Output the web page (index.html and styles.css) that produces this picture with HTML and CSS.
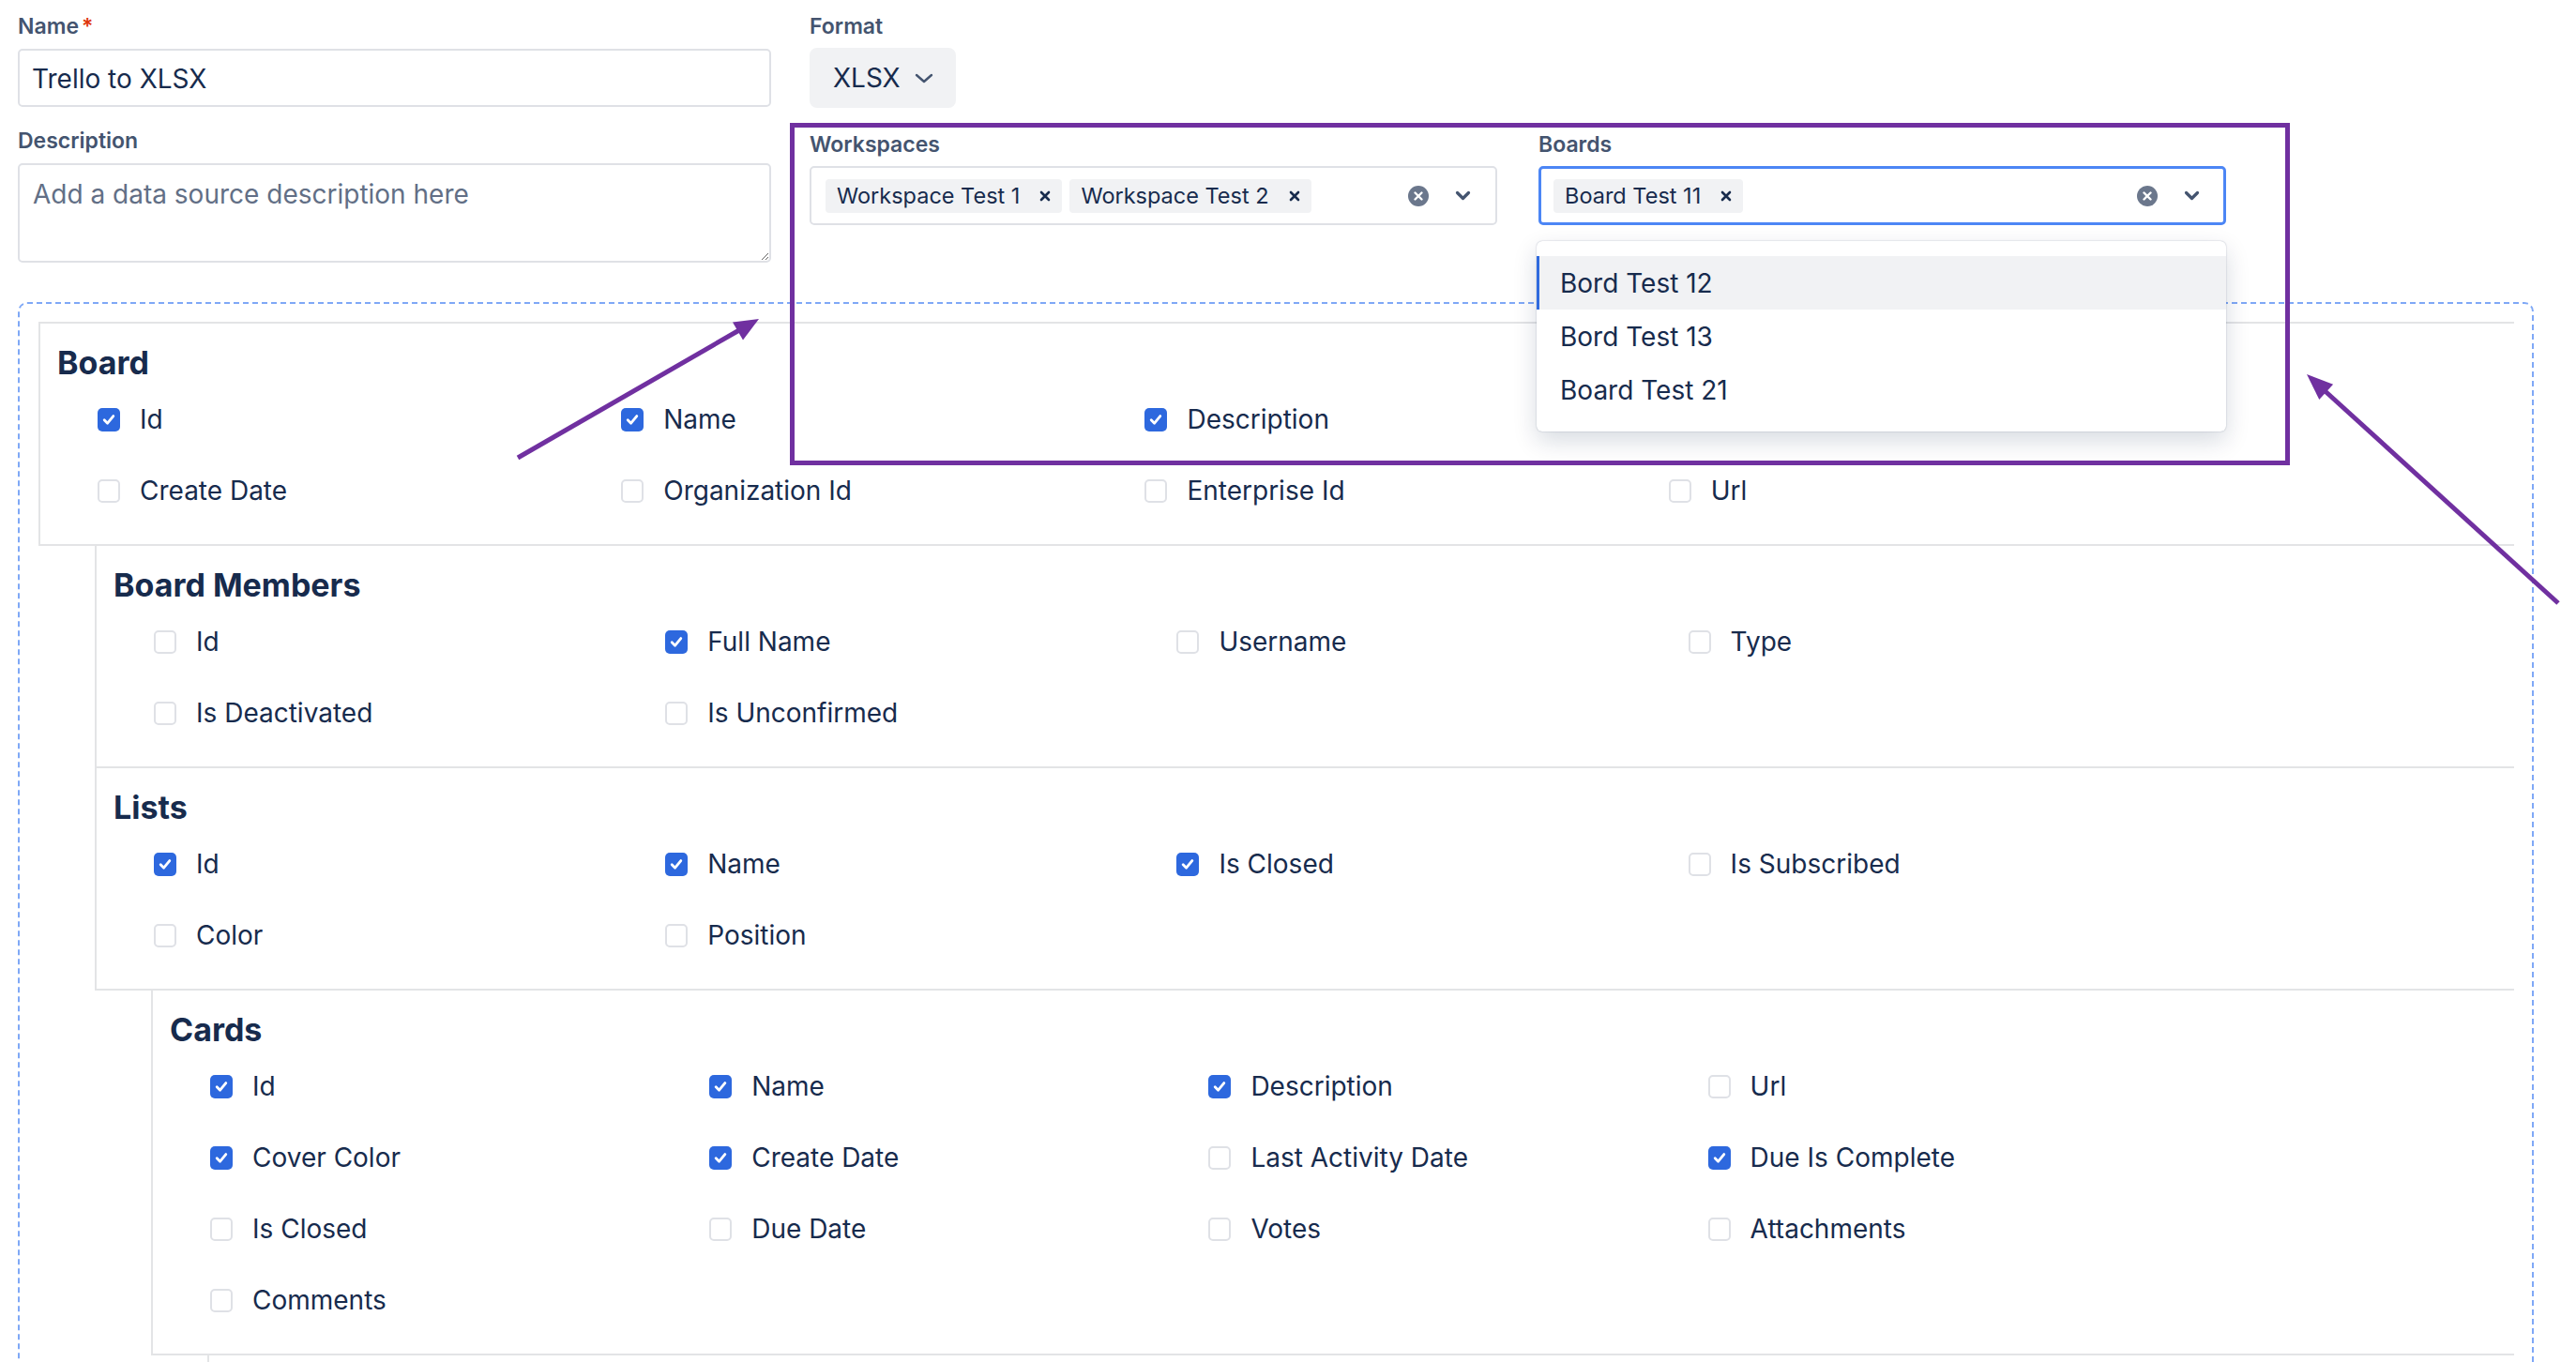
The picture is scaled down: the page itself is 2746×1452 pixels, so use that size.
FILE: index.html
```html
<!DOCTYPE html>
<html lang="en">
<head>
<meta charset="utf-8">
<title>Trello to XLSX</title>
<link rel="stylesheet" href="styles.css">
</head>
<body>
<div class="page">
  <div class="top">
    <div class="col-left">
      <div class="field">
        <label class="lbl">Name<span class="req">*</span></label>
        <input class="input" type="text" value="Trello to XLSX">
      </div>
      <div class="field field-desc">
        <label class="lbl">Description</label>
        <textarea class="textarea" placeholder="Add a data source description here"></textarea>
      </div>
    </div>
    <div class="col-right">
      <div class="field">
        <label class="lbl">Format</label>
        <button class="format-btn"><span>XLSX</span><svg class="fmt-chev" width="20" height="11" viewBox="0 0 20 11"><path d="M2 2 L10 9 L18 2" fill="none" stroke="#44546f" stroke-width="2.4" stroke-linecap="round" stroke-linejoin="round"/></svg></button>
      </div>
      <div class="selects">
        <div class="field sel-field">
          <label class="lbl">Workspaces</label>
          <div class="select">
            <span class="tag">Workspace Test 1<svg class="tag-x" width="12" height="12" viewBox="0 0 12 12"><path d="M2 2 L10 10 M10 2 L2 10" stroke="#172b4d" stroke-width="2.6" stroke-linecap="round"/></svg></span>
            <span class="tag">Workspace Test 2<svg class="tag-x" width="12" height="12" viewBox="0 0 12 12"><path d="M2 2 L10 10 M10 2 L2 10" stroke="#172b4d" stroke-width="2.6" stroke-linecap="round"/></svg></span>
            <div class="indicators">
              <svg class="clear" width="22" height="22" viewBox="0 0 22 22"><circle cx="11" cy="11" r="11" fill="#6b778c"/><path d="M7.5 7.5 L14.5 14.5 M14.5 7.5 L7.5 14.5" stroke="#fff" stroke-width="2.4" stroke-linecap="round"/></svg>
              <svg class="chev" width="17" height="11" viewBox="0 0 17 11"><path d="M2.5 2.5 L8.5 8.5 L14.5 2.5" fill="none" stroke="#44546f" stroke-width="3.2" stroke-linecap="round" stroke-linejoin="round"/></svg>
            </div>
          </div>
        </div>
        <div class="field sel-field">
          <label class="lbl">Boards</label>
          <div class="select focused">
            <span class="tag">Board Test 11<svg class="tag-x" width="12" height="12" viewBox="0 0 12 12"><path d="M2 2 L10 10 M10 2 L2 10" stroke="#172b4d" stroke-width="2.6" stroke-linecap="round"/></svg></span>
            <div class="indicators">
              <svg class="clear" width="22" height="22" viewBox="0 0 22 22"><circle cx="11" cy="11" r="11" fill="#6b778c"/><path d="M7.5 7.5 L14.5 14.5 M14.5 7.5 L7.5 14.5" stroke="#fff" stroke-width="2.4" stroke-linecap="round"/></svg>
              <svg class="chev" width="17" height="11" viewBox="0 0 17 11"><path d="M2.5 2.5 L8.5 8.5 L14.5 2.5" fill="none" stroke="#44546f" stroke-width="3.2" stroke-linecap="round" stroke-linejoin="round"/></svg>
            </div>
            <div class="menu">
              <div class="option active">Bord Test 12</div>
              <div class="option">Bord Test 13</div>
              <div class="option">Board Test 21</div>
            </div>
          </div>
        </div>
      </div>
    </div>
  </div>

  <div class="mapping">
    <div class="node root">
      <section class="box">
        <h3 class="title">Board</h3>
        <div class="fields">
          <label class="fld"><span class="cb on"></span>Id</label>
          <label class="fld"><span class="cb on"></span>Name</label>
          <label class="fld"><span class="cb on"></span>Description</label>
          <label class="fld"><span class="cb"></span>Closed</label>
          <label class="fld"><span class="cb"></span>Create Date</label>
          <label class="fld"><span class="cb"></span>Organization Id</label>
          <label class="fld"><span class="cb"></span>Enterprise Id</label>
          <label class="fld"><span class="cb"></span>Url</label>
        </div>
      </section>
      <div class="kids">
        <div class="node">
          <section class="box">
            <h3 class="title">Board Members</h3>
            <div class="fields">
              <label class="fld"><span class="cb"></span>Id</label>
              <label class="fld"><span class="cb on"></span>Full Name</label>
              <label class="fld"><span class="cb"></span>Username</label>
              <label class="fld"><span class="cb"></span>Type</label>
              <label class="fld"><span class="cb"></span>Is Deactivated</label>
              <label class="fld"><span class="cb"></span>Is Unconfirmed</label>
            </div>
          </section>
        </div>
        <div class="node">
          <section class="box">
            <h3 class="title">Lists</h3>
            <div class="fields">
              <label class="fld"><span class="cb on"></span>Id</label>
              <label class="fld"><span class="cb on"></span>Name</label>
              <label class="fld"><span class="cb on"></span>Is Closed</label>
              <label class="fld"><span class="cb"></span>Is Subscribed</label>
              <label class="fld"><span class="cb"></span>Color</label>
              <label class="fld"><span class="cb"></span>Position</label>
            </div>
          </section>
          <div class="kids">
            <div class="node">
              <section class="box">
                <h3 class="title">Cards</h3>
                <div class="fields">
                  <label class="fld"><span class="cb on"></span>Id</label>
                  <label class="fld"><span class="cb on"></span>Name</label>
                  <label class="fld"><span class="cb on"></span>Description</label>
                  <label class="fld"><span class="cb"></span>Url</label>
                  <label class="fld"><span class="cb on"></span>Cover Color</label>
                  <label class="fld"><span class="cb on"></span>Create Date</label>
                  <label class="fld"><span class="cb"></span>Last Activity Date</label>
                  <label class="fld"><span class="cb on"></span>Due Is Complete</label>
                  <label class="fld"><span class="cb"></span>Is Closed</label>
                  <label class="fld"><span class="cb"></span>Due Date</label>
                  <label class="fld"><span class="cb"></span>Votes</label>
                  <label class="fld"><span class="cb"></span>Attachments</label>
                  <label class="fld"><span class="cb"></span>Comments</label>
                </div>
              </section>
              <div class="kids">
                <div class="node">
                  <section class="box box-empty"></section>
                </div>
              </div>
            </div>
          </div>
        </div>
      </div>
    </div>
  </div>
</div>

<svg class="annot" width="2746" height="1452" viewBox="0 0 2746 1452">
  <rect x="844.5" y="133.5" width="1594" height="360" fill="none" stroke="#7030a0" stroke-width="5"/>
  <line x1="552" y1="488" x2="788" y2="352" stroke="#7030a0" stroke-width="5"/>
  <polygon points="809,340 792,362.5 781,343.5" fill="#7030a0"/>
  <line x1="2727" y1="643" x2="2478" y2="416.5" stroke="#7030a0" stroke-width="5"/>
  <polygon points="2459,399 2487.1,409.8 2472.3,426" fill="#7030a0"/>
</svg>
</body>
</html>
```
FILE: styles.css
```css
* { box-sizing: border-box; }
html, body { margin: 0; padding: 0; background: #fff; overflow: hidden; }
body { font-family: Inter, "Noto Sans", sans-serif; color: #172b4d; }

.page { width: 2701px; padding: 14px 0 0 19px; }

.top { display: flex; gap: 41px; }
.col-left { width: 803px; display: flex; flex-direction: column; }
.col-right { flex: 1; }

.lbl { display: block; font-size: 23px; line-height: 28px; font-weight: 600; color: #44546f; }
.req { color: #de350b; margin-left: 3px; }

.input {
  display: block; margin-top: 10px; width: 100%; height: 62px;
  border: 2px solid #dfe1e6; border-radius: 5px; padding: 2px 13px 0;
  font-family: Inter, sans-serif; font-size: 28px; color: #172b4d; outline: none; background: #fff;
}
.field-desc { margin-top: 22px; }
.textarea {
  display: block; margin-top: 10px; width: 100%; height: 106px;
  border: 2px solid #dfe1e6; border-radius: 5px; padding: 11px 14px;
  font-family: Inter, sans-serif; font-size: 28px; line-height: 40px; color: #172b4d;
  resize: vertical; outline: none;
}
.textarea::placeholder { color: #626f86; }

.format-btn {
  display: flex; align-items: center; gap: 15px;
  margin-top: 9px; height: 64px; width: 156px; padding: 0 0 0 25px;
  border: 0; border-radius: 8px; background: #f1f2f4;
  font-family: Inter, sans-serif; font-size: 28px; color: #172b4d;
}

.selects { display: flex; gap: 44px; margin-top: 25px; }
.sel-field { width: 733px; }
.select {
  position: relative; margin-top: 9px; height: 63px;
  display: flex; align-items: center; gap: 8px;
  border: 2px solid #dfe1e6; border-radius: 5px; padding: 0 26px 0 15px; background: #fff;
}
.select.focused { border: 3px solid #4c86f5; padding: 0 25px 0 13px; }

.tag {
  display: inline-flex; align-items: center; height: 36px; padding: 0 12px;
  background: #f1f2f4; border-radius: 4px;
  font-size: 23.5px; color: #172b4d; white-space: nowrap;
}
.tag-x { margin-left: 21px; }

.indicators { margin-left: auto; display: flex; align-items: center; gap: 28px; }

.menu {
  position: absolute; top: calc(100% + 20px); left: -5px; width: 735px;
  background: #fff; border-radius: 6px; padding: 16px 0; z-index: 5;
  box-shadow: 0 10px 26px rgba(9, 30, 66, 0.16), 0 0 1.5px rgba(9, 30, 66, 0.35);
}
.option { height: 57px; display: flex; align-items: center; padding-left: 25px; font-size: 28px; color: #172b4d; }
.option.active { background: #f1f2f4; box-shadow: inset 3px 0 0 #2f6ade; }

.mapping {
  margin-top: 42px; width: 2682px;
  border: 2px dashed #7fa8f6; border-radius: 10px;
  padding: 19px 19px 60px 20px;
}
.box {
  border-left: 2px solid #e3e4e6; border-bottom: 2px solid #e3e4e6;
  padding: 22px 0 21px 18px;
}
.root > .box { border-top: 2px solid #e3e4e6; }
.box-empty { height: 300px; }
.kids { margin-left: 60px; }

.title { margin: 0; font-size: 34px; line-height: 40px; font-weight: 700; color: #172b4d; }

.fields {
  display: grid; grid-template-columns: repeat(4, 21.67%); grid-auto-rows: 76px;
  margin-left: 43px; padding-top: 2px; margin-bottom: -2px;
}
.fld { display: flex; align-items: center; gap: 21px; font-size: 28px; color: #172b4d; white-space: nowrap; }
.cb {
  flex: none; width: 24px; height: 25px; border-radius: 5px;
  border: 2px solid #dfe1e6; background: #fff;
}
.cb.on {
  border: 0; background-color: #2d68de;
  background-image: url("data:image/svg+xml,%3Csvg xmlns='http://www.w3.org/2000/svg' width='24' height='25' viewBox='0 0 24 25'%3E%3Cpath d='M7.2 12.8 L10.6 16.2 L16.8 8.6' fill='none' stroke='white' stroke-width='2.8' stroke-linecap='round' stroke-linejoin='round'/%3E%3C/svg%3E");
}

.annot { position: absolute; left: 0; top: 0; pointer-events: none; z-index: 10; }
```
